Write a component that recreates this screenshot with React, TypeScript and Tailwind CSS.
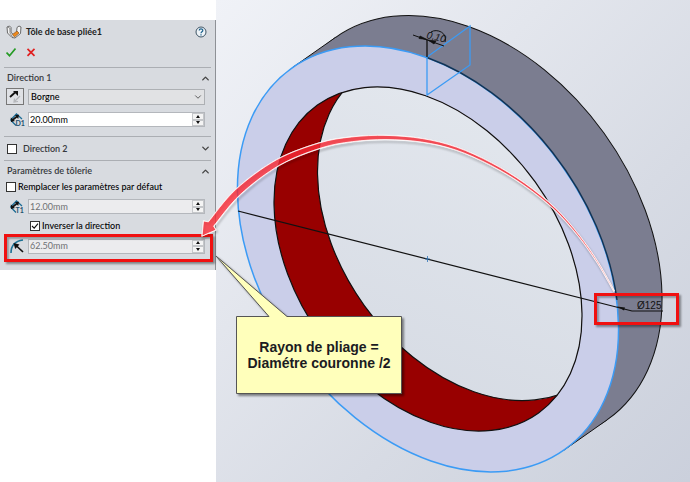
import { useState, type ReactNode } from "react";
import { ChevronDown, ChevronUp } from "lucide-react";

interface Point {
  x: number;
  y: number;
}

// smooth curve through a list of points
function curve(points: Point[]) {
  let d = "";
  for (let i = 0; i < points.length - 1; i++) {
    const p0 = points[i - 1] || points[i];
    const p1 = points[i];
    const p2 = points[i + 1];
    const p3 = points[i + 2] || p2;
    d += ` C${p1.x + (p2.x - p0.x) / 6} ${p1.y + (p2.y - p0.y) / 6} ${p2.x - (p3.x - p1.x) / 6} ${p2.y - (p3.y - p1.y) / 6} ${p2.x} ${p2.y}`;
  }
  return d;
}

// centre line of the red arrow, with its half width
const arrowLine = [
  { x: 211, y: 224, w: 3.4 },
  { x: 238, y: 192, w: 3.4 },
  { x: 278, y: 162.5, w: 3.1 },
  { x: 320, y: 145.5, w: 2.7 },
  { x: 352, y: 139.3, w: 2.4 },
  { x: 386, y: 137.5, w: 2.1 },
  { x: 422, y: 140.3, w: 1.8 },
  { x: 456, y: 148.5, w: 1.5 },
  { x: 491, y: 164, w: 1.3 },
  { x: 524, y: 184, w: 1.1 },
  { x: 555, y: 209, w: 0.9 },
  { x: 579, y: 236, w: 0.7 },
  { x: 598, y: 263, w: 0.5 },
  { x: 614, y: 291, w: 0.3 },
];

function arrowPath() {
  const side = (sign: number) =>
    arrowLine.map((p, i) => {
      const a = arrowLine[i - 1] || p;
      const b = arrowLine[i + 1] || p;
      const len = Math.hypot(b.x - a.x, b.y - a.y);
      return {
        x: p.x + (sign * p.w * (b.y - a.y)) / len,
        y: p.y - (sign * p.w * (b.x - a.x)) / len,
      };
    });
  const top = side(1);
  const bottom = side(-1).reverse();
  return `M202 236 L203.5 221 L${top[0].x} ${top[0].y}${curve(top)} L${bottom[0].x} ${bottom[0].y}${curve(bottom)} L216 230 Z`;
}

function SheetMetalIcon() {
  return (
    <svg viewBox="0 0 16 14" className="h-[14px] w-4 shrink-0" fill="none">
      <path d="M1 2 L3.5 1 L5 2.5 L5 7.5 L7.5 9.5 L10.5 8 L11 2.5 L13 1 L15 2 L14.5 8.5 L9 13 L6 12.5 L1.5 8 Z" fill="#f3f3f3" stroke="#5a5a5a" strokeWidth=".9" />
      <path d="M6.5 9.5 L11 6 L13 8 L8.5 12 Z" fill="#f08a1c" stroke="#7a4a16" strokeWidth=".6" />
      <path d="M1.5 2 L3.8 3 L4 8 L6.5 12" stroke="#777" strokeWidth=".8" />
    </svg>
  );
}

function DimensionIcon({ label }: { label: string }) {
  return (
    <svg viewBox="0 0 16 14" className="h-[14px] w-4 shrink-0" fill="none">
      <path d="M1.5 7 L7.5 1 L13 6 M1.5 7 L7 12.5" stroke="#1d6d96" strokeWidth="1.3" />
      <path d="M3.5 7 L8 3.5" stroke="#111" strokeWidth="1.6" />
      <path d="M1.8 4.5 L2 9 L6 8 Z M6 2 L10 1.8 L9.2 6 Z" fill="#111" />
      <text x="6.5" y="13" fontSize="7" fontWeight="700" fill="#1d4f6e" className="font-[Lato,sans-serif]">
        {label}
      </text>
    </svg>
  );
}

function RadiusIcon() {
  return (
    <svg viewBox="0 0 16 16" className="h-4 w-4 shrink-0" fill="none">
      <path d="M2 15 C2 8 6 3 14 2" stroke="#1d7396" strokeWidth="1.6" />
      <path d="M6.5 7 L14 14" stroke="#111" strokeWidth="1.7" />
      <path d="M4.5 5 L10.5 6.6 L6.2 11 Z" fill="#111" />
    </svg>
  );
}

interface SpinFieldProps {
  label: string;
  value: string;
  icon: ReactNode;
  disabled?: boolean;
}

function SpinField({ label, value, icon, disabled }: SpinFieldProps) {
  const [text, setText] = useState(value);

  return (
    <div className="flex items-center">
      <span className="flex w-[22px] shrink-0 justify-center">{icon}</span>
      <div
        className={`flex h-[15px] min-w-0 flex-1 border border-[#b4b7bc] ${disabled ? "bg-[#ececee] text-[#6f7174]" : "bg-white text-black"}`}
      >
        <input
          aria-label={label}
          value={text}
          disabled={disabled}
          onChange={(e) => setText(e.target.value)}
          className="min-w-0 flex-1 px-px leading-3 outline-none"
        />
        <div className="flex w-3 flex-col bg-[#f4f4f4]">
          <button type="button" aria-label={`${label} +`} className="flex flex-1 items-center justify-center border border-[#c5c7ca]">
            <svg viewBox="0 0 4 3" className="h-[3px] w-1">
              <path d="M0 3 L2 0 L4 3 Z" fill="#111" />
            </svg>
          </button>
          <button type="button" aria-label={`${label} -`} className="flex flex-1 items-center justify-center border border-[#c5c7ca]">
            <svg viewBox="0 0 4 3" className="h-[3px] w-1">
              <path d="M0 0 L2 3 L4 0 Z" fill="#111" />
            </svg>
          </button>
        </div>
      </div>
    </div>
  );
}

function CheckBox({ label, checked = false, strong = false }: { label: string; checked?: boolean; strong?: boolean }) {
  const [on, setOn] = useState(checked);

  return (
    <label className={`flex h-3 items-center ${strong ? "gap-[6px] font-semibold text-[#36393d]" : "gap-[2px] font-medium text-black"}`}>
      <span className="grid h-[10px] w-[10px] shrink-0">
        <input
          type="checkbox"
          checked={on}
          onChange={() => setOn(!on)}
          className="col-start-1 row-start-1 h-[10px] w-[10px] appearance-none border border-[#333] bg-white"
        />
        {on && (
          <svg viewBox="0 0 10 10" className="pointer-events-none col-start-1 row-start-1" fill="none">
            <path d="M2 5 L4.2 7.2 L8 2.6" stroke="#111" strokeWidth="1.1" />
          </svg>
        )}
      </span>
      {label}
    </label>
  );
}

function PropertyPanel() {
  return (
    <form className="mt-5 border-r border-[#8e9196] bg-[#d8dbe0] pr-1 pl-1 text-[9px] leading-3 text-black">
      {/* TITLE */}
      <div className="flex h-6 items-center gap-1 pr-1 pl-[2px]">
        <SheetMetalIcon />
        <h1 className="flex-1 font-bold text-[#222]">Tôle de base pliée1</h1>
        <button type="button" aria-label="Aide">
          <svg viewBox="0 0 12 12" className="h-3 w-3">
            <circle cx="6" cy="6" r="5" fill="#eef3f7" stroke="#3f5566" />
            <path d="M4.2 4.6 C4.2 2.4 7.8 2.4 7.8 4.5 C7.8 5.8 6 5.8 6 7.2 M6 8.2 V9.4" fill="none" stroke="#1b618c" strokeWidth="1.2" />
          </svg>
        </button>
      </div>
      <div className="flex h-[23px] gap-[10px] pt-[3px] pl-[2px]">
        <button type="button" aria-label="OK" className="h-[10px] w-[10px]">
          <svg viewBox="0 0 10 10" fill="none">
            <path d="M.5 5.5 L3.5 8.7 L9.5 1.5" stroke="#259b24" strokeWidth="1.7" />
          </svg>
        </button>
        <button type="button" aria-label="Annuler" className="h-[10px] w-[10px]">
          <svg viewBox="0 0 10 10" fill="none">
            <path d="M1.5 1.8 L8.5 8.8 M8.5 1.8 L1.5 8.8" stroke="#e02020" strokeWidth="1.7" />
          </svg>
        </button>
      </div>

      {/* DIRECTION 1 */}
      <section className="border-t border-[#abaeb3] pb-[9px]">
        <div className="flex h-5 items-center justify-between pl-[3px]">
          <h2 className="font-semibold text-[#36393d]">Direction 1</h2>
          <ChevronUp size={11} color="#444" strokeWidth={3} />
        </div>
        <div className="flex flex-col gap-[7px] pr-[6px] pl-[2px]">
          <div className="flex h-[17px] items-center gap-1">
            <button type="button" aria-label="Inverser" className="h-[17px] w-[18px] shrink-0 border border-[#777] bg-[#dfe1e5]">
              <svg viewBox="0 0 16 15" fill="none">
                <path d="M3 8 L8 3.5" stroke="#111" strokeWidth="1.8" />
                <path d="M6 2 H11 V7 Z" fill="#111" />
                <path d="M13 7 L8 12 M7.5 9.500 L7 13 L11 12.500" stroke="#b3b5b9" strokeWidth="1.2" />
              </svg>
            </button>
            <div className="grid h-4 min-w-0 flex-1 items-center border border-[#adb0b4] bg-[#e1e2e4]">
              <select
                aria-label="Type de fin"
                className="col-start-1 row-start-1 w-full appearance-none pl-[2px] leading-3 font-medium outline-none"
              >
                <option>Borgne</option>
              </select>
              <ChevronDown size={10} color="#444" className="pointer-events-none col-start-1 row-start-1 mr-px justify-self-end" />
            </div>
          </div>
          <SpinField label="Profondeur" value="20.00mm" icon={<DimensionIcon label="D1" />} />
        </div>
      </section>

      {/* DIRECTION 2 */}
      <section className="flex h-6 items-center justify-between border-t border-[#abaeb3] pl-[3px]">
        <CheckBox label="Direction 2" strong />
        <ChevronDown size={11} color="#444" strokeWidth={3} />
      </section>

      {/* SHEET METAL */}
      <section className="border-t border-[#abaeb3] pb-4">
        <div className="flex h-5 items-center justify-between pl-[3px]">
          <h2 className="font-semibold text-[#36393d]">Paramètres de tôlerie</h2>
          <ChevronUp size={11} color="#444" strokeWidth={3} />
        </div>
        <div className="flex flex-col gap-[6px] pr-[6px] pl-[2px]">
          <CheckBox label="Remplacer les paramètres par défaut" />
          <SpinField label="Epaisseur" value="12.00mm" icon={<DimensionIcon label="T1" />} disabled />
          <div className="pl-6">
            <CheckBox label="Inverser la direction" checked />
          </div>
          <SpinField label="Rayon de pliage" value="62.50mm" icon={<RadiusIcon />} disabled />
        </div>
      </section>
    </form>
  );
}

interface RingProps {
  inner?: boolean;
  fill?: string;
  stroke: string;
  strokeWidth?: number;
}

function Ring({ inner, ...rest }: RingProps) {
  return <ellipse rx={inner ? 189.5 : 234.5} ry={inner ? 132 : 163.3} transform="rotate(54.3)" {...rest} />;
}

function ModelView() {
  return (
    <svg
      viewBox="216 0 474 482"
      preserveAspectRatio="xMinYMin slice"
      className="block h-full w-full"
      fill="none"
    >
      <defs>
        <linearGradient id="sky" x1="0" y1="0" x2="1" y2="1">
          <stop offset="0" stopColor="#f0f2f7" />
          <stop offset=".35" stopColor="#e3e6ed" />
          <stop offset=".65" stopColor="#d7dbe4" />
          <stop offset="1" stopColor="#cbd0dc" />
        </linearGradient>
        <linearGradient id="inside" x1="0" y1="0" x2="1" y2="1">
          <stop offset="0" stopColor="#e6eaf0" />
          <stop offset="1" stopColor="#d5dae3" />
        </linearGradient>
        <clipPath id="hole">
          <ellipse rx="189.5" ry="132" transform="translate(428 259) rotate(54.3)" />
        </clipPath>
      </defs>
      <rect x="216" width="474" height="482" fill="url(#sky)" />

      {/* outer wall */}
      <g transform="translate(471.5 228.5)">
        <Ring fill="#7b7d90" stroke="#111" />
      </g>
      <path d="M292.3 67.7 L335.8 37.2 L607.2 419.8 L563.7 450.3 Z" fill="#7b7d90" />
      <path d="M292.3 67.7 L335.8 37.2 M607.2 419.8 L563.7 450.3" stroke="#111" />

      {/* front face */}
      <g transform="translate(428 259)">
        <Ring fill="#cacee9" stroke="#3b9bf5" strokeWidth={1.5} />
      </g>
      <path d="M427 57.5 A234.5 163.3 54.3 0 1 617 300" stroke="#16324f" strokeWidth="1.4" />

      {/* inner wall seen through the hole */}
      <g clipPath="url(#hole)">
        <rect x="216" width="474" height="482" fill="#980000" />
        <g transform="translate(471.5 228.5)">
          <Ring inner fill="url(#inside)" stroke="#111" strokeWidth={1.2} />
        </g>
      </g>
      <g transform="translate(428 259)">
        <Ring inner stroke="#111" strokeWidth={1.2} />
      </g>

      {/* sketch profile and dimensions */}
      <path d="M427 57 V95 L470 65 V26 Z" stroke="#3b9bf5" strokeWidth="1.3" />
      <path d="M427 39 V57" stroke="#111" strokeWidth="1.3" />
      <path d="M413 35 L444 46" stroke="#111" />
      <path d="M420 36 L427 39.5 L419 38.5 Z M428 40 L436 41 L434 44 Z" fill="#111" stroke="#111" strokeWidth=".7" />
      <path d="M431 32 C437 28 448 33 445 42" stroke="#111" />
      <text x="426" y="38" fontSize="10" fill="#111" transform="rotate(14 426 38)" className="font-['Liberation_Sans',sans-serif] italic">
        0,10
      </text>
      <path d="M238 211 L632 311 H663" stroke="#111" strokeWidth="1.2" />
      <path d="M617 306.500 L625 307.500 L624 310.500 Z" fill="#111" />
      <path d="M427.5 256 V262 M425 259 H430" stroke="#2c74b8" strokeWidth=".8" />
      <text x="637" y="309" fontSize="10" fill="#111" className="font-['Liberation_Sans',sans-serif]">
        Ø125
      </text>
    </svg>
  );
}

// red marks and the note, drawn over the panel and the model
function Annotations() {
  return (
    <div className="pointer-events-none absolute inset-0 overflow-hidden">
      <div className="absolute top-[234px] left-1 h-7 w-[209px] border-[3px] border-[#f01010] shadow-[2px_2px_2px_rgba(0,0,0,0.4),inset_2px_2px_2px_rgba(0,0,0,0.3)]" />
      <svg width="690" height="482" viewBox="0 0 690 482" className="absolute top-0 left-0" fill="none">
        <path d={arrowPath()} className="drop-shadow-[1px_2px_1px_rgba(0,0,0,0.4)]" stroke="#fff" strokeWidth="1.3" strokeOpacity=".8" />
        <path d={arrowPath()} fill="#fb2b36" fillOpacity=".8" stroke="#fff" strokeWidth="1" strokeOpacity=".8" />
        <path
          d="M236.5 316.5 H269 L216 256 L287 316.5 H401.5 V393.5 H236.5 Z"
          className="drop-shadow-[2px_2px_1px_rgba(0,0,0,0.45)]"
          fill="#ffffbb"
          stroke="#555"
        />
      </svg>
      <div className="absolute top-[293px] left-[594px] h-8 w-[85px] border-[3px] border-[#f01010] shadow-[2px_2px_2px_rgba(0,0,0,0.4),inset_2px_2px_2px_rgba(0,0,0,0.3)]" />
      <p className="absolute top-[317px] left-[237px] flex h-[76px] w-[164px] items-center justify-center text-center font-['Liberation_Sans',sans-serif] text-[14px] leading-4 font-bold whitespace-nowrap text-[#1b1b22]">
        Rayon de pliage =<br />
        Diamétre couronne /2
      </p>
    </div>
  );
}

export default function App() {
  return (
    <main className="relative flex min-h-screen bg-white font-[Lato,'Open_Sans',sans-serif]">
      <aside className="w-[216px] shrink-0">
        <PropertyPanel />
      </aside>
      <div className="min-w-0 flex-1">
        <ModelView />
      </div>
      <Annotations />
    </main>
  );
}
